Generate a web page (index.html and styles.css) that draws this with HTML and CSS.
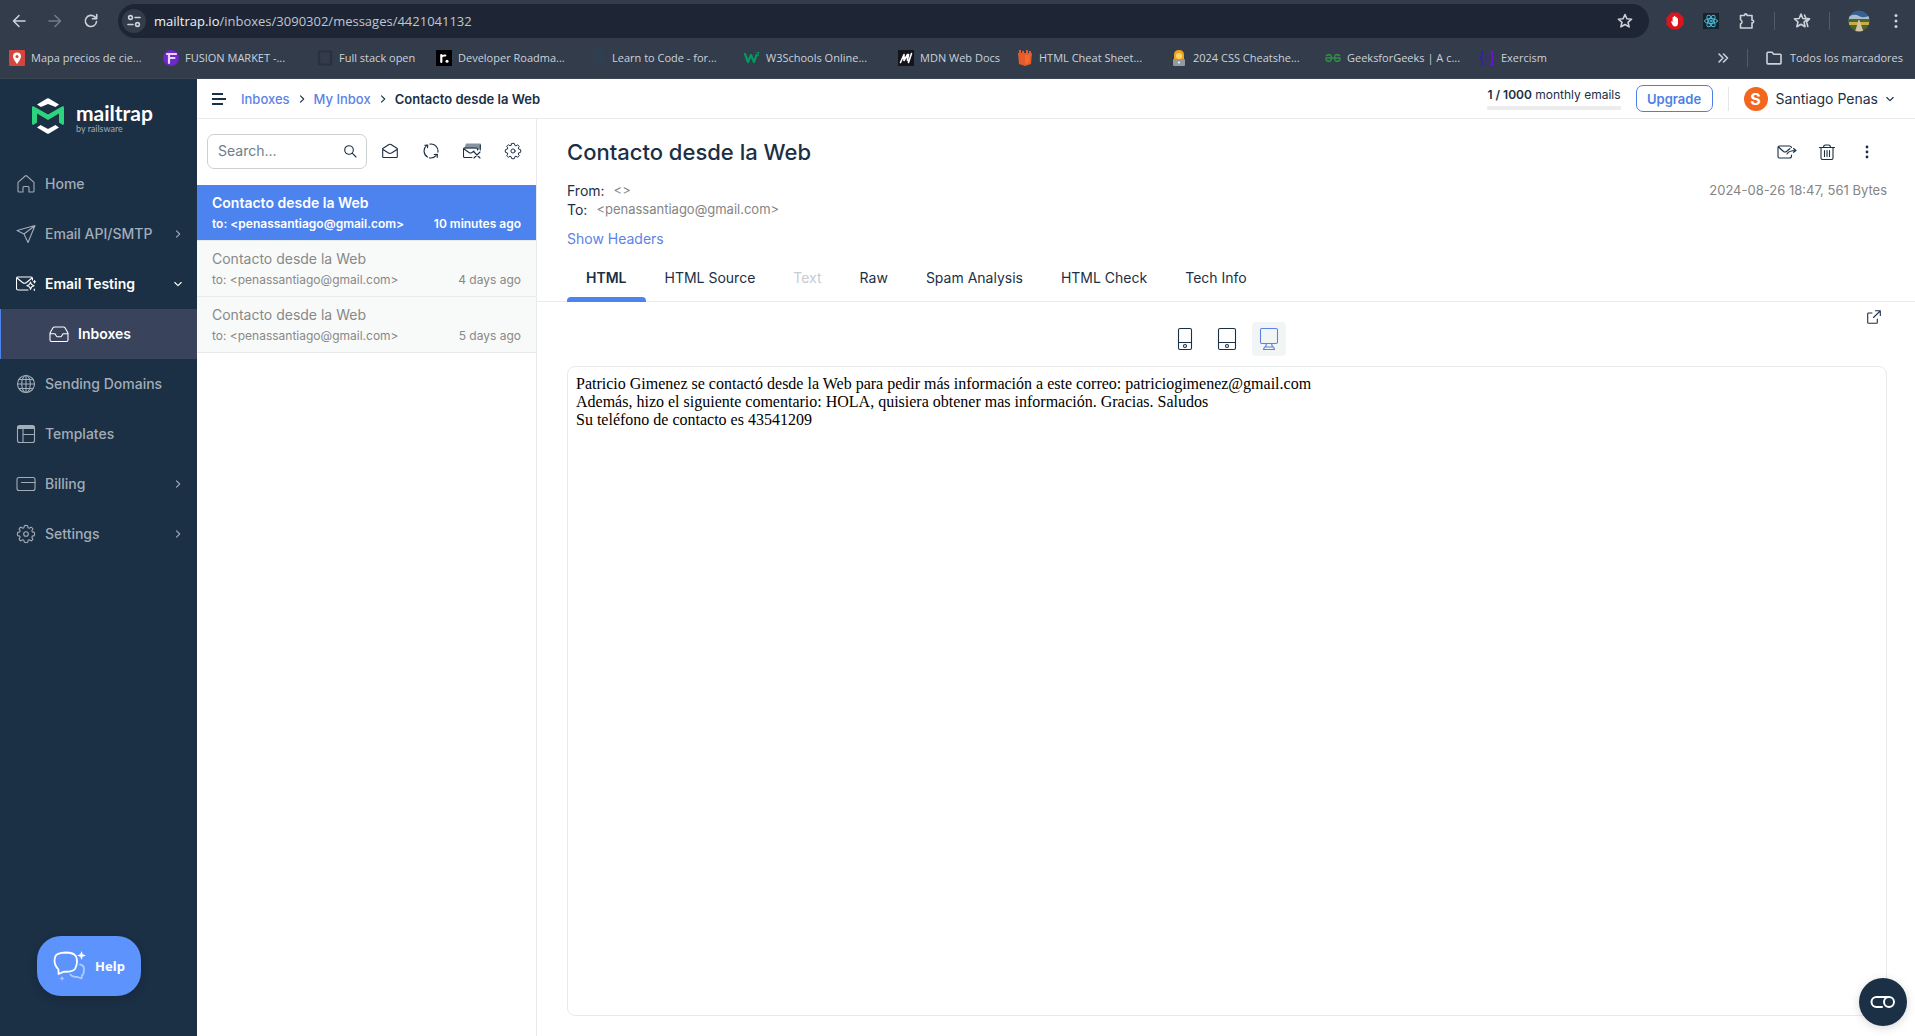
FILE: index.html
```html
<!DOCTYPE html>
<html lang="en">
<head>
<meta charset="utf-8">
<title>Contacto desde la Web - Mailtrap</title>
<link rel="stylesheet" href="styles.css">
</head>
<body>
<svg class="defs" aria-hidden="true">
  <symbol id="gear" viewBox="0 0 20 20"><path d="M8.400 1.800 Q10 1 11.600 1.800 L12.100 3.800 L13.300 4.300 L15.100 3.200 Q16.600 3.800 16.900 5 L15.800 6.700 L16.300 7.900 L18.300 8.400 Q19.100 10 18.300 11.600 L16.300 12.100 L15.800 13.300 L16.900 15.100 Q16.200 16.600 15 16.900 L13.300 15.800 L12.100 16.300 L11.600 18.300 Q10 19.100 8.400 18.300 L7.900 16.300 L6.700 15.800 L4.900 16.900 Q3.400 16.200 3.100 15 L4.200 13.300 L3.700 12.100 L1.700 11.600 Q.9 10 1.700 8.400 L3.700 7.900 L4.200 6.700 L3.100 4.900 Q3.800 3.400 5 3.100 L6.700 4.200 L7.900 3.700Z"/><circle cx="10" cy="10" r="2.300"/></symbol>
  <symbol id="right" viewBox="0 0 8 8"><path d="M2.500 .8 L5.700 4 L2.500 7.200"/></symbol>
  <symbol id="down" viewBox="0 0 8 8"><path d="M.8 2.500 L4 5.700 L7.200 2.500"/></symbol>
</svg>

<div class="browser">
  <div class="toolbar">
    <button class="nav-btn" aria-label="Back"><svg class="ic16" viewBox="0 0 16 16"><path d="M14 8H2.500M8 2.500 2.500 8 8 13.500"/></svg></button>
    <button class="nav-btn faded" aria-label="Forward"><svg class="ic16" viewBox="0 0 16 16"><path d="M2 8h11.500M8 2.500 13.500 8 8 13.500"/></svg></button>
    <button class="nav-btn" aria-label="Reload"><svg class="ic16" viewBox="0 0 16 16"><path d="M13.500 8.500a5.600 5.600 0 1 1-1.700-4.600L13.500 5.500M13.700 1.500v4.300H9.400"/></svg></button>
    <div class="omnibox">
      <span class="site-info"><svg class="ic14" viewBox="0 0 14 14"><circle cx="3.500" cy="3.500" r="1.900"/><path d="M8 3.500h5M1 10.500h5"/><circle cx="10.500" cy="10.500" r="1.900"/></svg></span>
      <span class="url"><b>mailtrap.io</b>/inboxes/3090302/messages/4421041132</span>
      <svg class="ic16" viewBox="0 0 16 16"><path d="m8 1.500 1.900 4.300 4.700.4-3.600 3.100 1.100 4.600L8 11.500l-4.100 2.400L5 9.300 1.400 6.200l4.700-.4z"/></svg>
    </div>
    <div class="extensions">
      <svg class="ic18" viewBox="0 0 18 18"><path class="fill-red" d="M5.500.5h7l5 5v7l-5 5h-7l-5-5v-7z"/><path class="fill-white" d="M5 9.500q1-.6 1.600.5V5.300q.7-.9 1.300 0V4.200q.7-.9 1.400 0v1q.7-.9 1.400 0v1.300q.7-.8 1.300 0V11c0 2-1 3.500-2.800 3.500-2 0-3.200-2-4.200-5z"/></svg>
      <svg class="ic18" viewBox="0 0 18 18"><path class="fill-dark" d="M1 1h16v16H1z"/><g class="react"><ellipse cx="9" cy="9" rx="6.500" ry="2.500"/><ellipse cx="9" cy="9" rx="6.500" ry="2.500" transform="rotate(60 9 9)"/><ellipse cx="9" cy="9" rx="6.500" ry="2.500" transform="rotate(120 9 9)"/><circle cx="9" cy="9" r="1"/></g></svg>
      <svg class="ic18" viewBox="0 0 18 18"><path d="M2.500 3.500h4V2.800q1-1.800 2.500 0v.7h5v4.700h.8q1.800 1.200 0 2.600H14v5.200H2.500v-4q3-2 0-4.300z"/></svg>
      <i class="bar"></i>
      <svg class="ic18" viewBox="0 0 18 18"><path d="m8 2 1.800 4.500 4.700.4L11 10l1 4.700-4-2.500-4.200 2.500L5 10 1.500 6.900l4.700-.4zM11.500 3l1.300 3.300 3.700.6-3 3 1.300 4.600"/></svg>
      <i class="bar"></i>
      <svg class="ic22" viewBox="0 0 22 22"><clipPath id="round"><circle cx="11" cy="11" r="10.500"/></clipPath><g clip-path="url(#round)"><path fill="#35608f" d="M0 0h22v12H0z"/><path fill="#a9bccb" d="M0 7q6-4 11-1t11-1v5H0z"/><path fill="#4c6529" d="M0 9h22v13H0z"/><path fill="#c9ac45" d="M0 12h22v3H0z"/><path fill="#d0c3a6" d="M10.500 10h1l4 12H7z"/></g></svg>
      <svg class="ic16 solid" viewBox="0 0 16 16"><circle cx="8" cy="2.500" r="1.500"/><circle cx="8" cy="8" r="1.500"/><circle cx="8" cy="13.500" r="1.500"/></svg>
    </div>
  </div>
  <nav class="bookmarks" aria-label="Bookmarks">
    <a href="#" class="mark wide"><svg class="ic16" viewBox="0 0 16 16"><rect fill="#d6453d" stroke="none" width="16" height="16" rx="1"/><path class="fill-white" d="M8 2.500a4 4 0 0 1 4 4c0 2.500-4 7.500-4 7.500S4 9 4 6.500a4 4 0 0 1 4-4z"/><circle cx="8" cy="6.500" r="1.500" fill="#d6453d" stroke="none"/></svg><span>Mapa precios de cie...</span></a>
    <a href="#" class="mark wide"><svg class="ic16" viewBox="0 0 16 16"><circle cx="8" cy="8" r="8" fill="#6d28c9" stroke="none"/><path class="line2" stroke="#e8d4ff" d="M4 4h9M6 13V8h5.500M6 8V4"/></svg><span>FUSION MARKET -...</span></a>
    <a href="#" class="mark"><svg class="ic16" viewBox="0 0 16 16"><rect class="line2" x="2" y="1.500" width="12" height="13" stroke="#2b313a"/></svg><span>Full stack open</span></a>
    <a href="#" class="mark wide"><svg class="ic16" viewBox="0 0 16 16"><path fill="#000" stroke="none" d="M0 0h16v16H0z"/><path class="line2" stroke="#fff" d="M5.300 12V5M5.300 7q1-1.700 4-1.500"/><circle cx="11" cy="11.300" r="1.500" class="fill-white"/></svg><span>Developer Roadma...</span></a>
    <a href="#" class="mark wide"><svg class="ic16" viewBox="0 0 16 16"><path fill="#2f3e50" stroke="none" d="M3 0h10v16H3z"/></svg><span>Learn to Code - for...</span></a>
    <a href="#" class="mark wide"><svg class="ic16" viewBox="0 0 16 16"><path class="line2" stroke="#059862" d="m1 4 3 8 3-7 3 7 2.500-7"/><path class="line1" stroke="#059862" d="M13 2.500h2L14 4q2 1.500-1 2"/></svg><span>W3Schools Online...</span></a>
    <a href="#" class="mark"><svg class="ic16" viewBox="0 0 16 16"><path fill="#15141a" stroke="none" d="M0 0h16v16H0z"/><path stroke="#fff" d="m2.500 12.500 3.500-8v6l3.500-6v6l1-6M13.500 3.500 10.500 12.500"/></svg><span>MDN Web Docs</span></a>
    <a href="#" class="mark wide"><svg class="ic16" viewBox="0 0 16 16"><path fill="#e55b2b" stroke="none" d="M1 3h14l-1 11-6 2-6-2zM2 0h2v4H2zM5 1h2v3H5zM9 0h2v4H9zM12 1h2v3h-2z"/><path fill="#f4692e" stroke="none" d="M8 5h5l-1 8-4 1.500z"/></svg><span>HTML Cheat Sheet...</span></a>
    <a href="#" class="mark wide"><svg class="ic16" viewBox="0 0 16 16"><path fill="#f0a31d" stroke="none" d="M3 9V5q0-5 5-5t5 5v4z"/><circle cx="8" cy="6" r="3" fill="#fcd56a" stroke="none"/><rect x="2" y="9" width="12" height="7" rx="1" fill="#94999d" stroke="none"/><circle cx="8" cy="12.500" r="1" class="fill-white"/></svg><span>2024 CSS Cheatshe...</span></a>
    <a href="#" class="mark wide"><svg class="ic16" viewBox="0 0 16 16"><path stroke="#2f8d46" d="M1 8h14M1.500 5.500q5-2.500 5 2.500t-5 2.500Q1 9.500 1 8M14.500 5.500q-5-2.500-5 2.500t5 2.500Q15 9.500 15 8"/></svg><span>GeeksforGeeks | A c...</span></a>
    <a href="#" class="mark"><svg class="ic16" viewBox="0 0 16 16"><path stroke="#3d16c4" d="M4.500 1.500H2.800v5L1.500 8l1.300 1.500v5h1.700"/><path stroke="#6a14d8" d="M11.500 1.500h1.700v5L14.500 8l-1.300 1.500v5h-1.700"/><path class="line1" stroke="#4a16c4" d="M6 7h1M9 7h1M6.500 10q1.500 1 3 0"/></svg><span>Exercism</span></a>
    <span class="mark-end">
      <svg class="ic12" viewBox="0 0 12 12"><path d="m2 2 4 4-4 4M6.500 2l4 4-4 4"/></svg>
      <i class="bar"></i>
      <a href="#" class="mark"><svg class="ic16" viewBox="0 0 16 16"><path d="M1 13V3.200q0-.9.900-.9h4.200l1.600 1.900h6.400q.9 0 .9.900V13q0 .9-.9.900H1.900Q1 13.900 1 13z"/></svg><span>Todos los marcadores</span></a>
    </span>
  </nav>
</div>

<div class="app">
  <aside class="sidebar">
    <a href="#" class="logo" aria-label="Mailtrap by Railsware">
      <svg class="logo-mark" viewBox="0 0 32 36"><path class="fill-white" d="M5 6.500 15 .6q1-.6 2 0L27 6.500 23.500 9 16 6 9 9zM5 29.500l10 5.900q1 .6 2 0l10-5.900-3.500-2.500-7.500 4-7.500-4z"/><path fill="#2bd47d" d="M0 9.500q0-2 2-1l14 8 14-8q2-1 2 1v16q0 2-2 1l-3-2V15.500L16 22 5 15.500v9l-3 2q-2 1-2-1z"/></svg>
      <span class="logo-text"><strong>mailtrap</strong><small>by railsware</small></span>
    </a>
    <nav class="menu">
      <a href="#"><svg class="ic20" viewBox="0 0 20 20"><path d="M2 8.300 9.200 2q.8-.7 1.600 0L18 8.300V17q0 1-1 1h-4v-4.500q0-1-1-1H8q-1 0-1 1V18H3q-1 0-1-1z"/></svg><span>Home</span></a>
      <a href="#"><svg class="ic20" viewBox="0 0 20 20"><path d="M1 6.500 19 1.500 12 18.500 8 10zM8 10 19 1.500"/></svg><span>Email API/SMTP</span><svg class="ic8"><use href="#right"/></svg></a>
      <a href="#" class="open"><svg class="ic20" viewBox="0 0 20 20"><path d="M12 16H2q-1.500 0-1.500-1.500v-10Q.5 3 2 3h13q1.500 0 1.500 1.500V6M1 4l5.500 4.500q2 1.500 4 0L16 4M14.500 8q.4 3.200 3.600 3.700-3.200.5-3.600 3.800-.4-3.300-3.700-3.800 3.300-.5 3.700-3.700zM18.500 6.500v2.400M17.300 7.700h2.400M18.300 15v1.500"/></svg><span>Email Testing</span><svg class="ic8"><use href="#down"/></svg></a>
      <a href="#" class="sub"><svg class="ic20" viewBox="0 0 20 20"><path d="M1 9 4 3.700Q4.500 3 5.500 3h9q1 0 1.500.7L19 9v7q0 1.500-1.500 1.500h-15Q1 17.500 1 16zM1 9.800h5l1.500 2.400q.3.500 1 .5h3q.7 0 1-.5L14 9.800h5"/></svg><span>Inboxes</span></a>
      <a href="#"><svg class="ic20" viewBox="0 0 20 20"><circle cx="10" cy="10" r="8.500"/><ellipse cx="10" cy="10" rx="4.300" ry="8.500"/><path d="M10 1.500v17M1.500 10h17M3 5.500h14M3 14.500h14"/></svg><span>Sending Domains</span></a>
      <a href="#"><svg class="ic20" viewBox="0 0 20 20"><rect x="1.500" y="1.500" width="17" height="17" rx="2"/><path d="M2 2.500h16M2 3.500h16M1.500 4.500h17M7 4.500v14M7 10.500h11.500"/></svg><span>Templates</span></a>
      <a href="#"><svg class="ic20" viewBox="0 0 20 20"><rect x="1" y="3.500" width="18" height="13" rx="2"/><path d="M5.500 8.500H19"/></svg><span>Billing</span><svg class="ic8"><use href="#right"/></svg></a>
      <a href="#"><svg class="ic20"><use href="#gear"/></svg><span>Settings</span><svg class="ic8"><use href="#right"/></svg></a>
    </nav>
    <button class="help"><svg viewBox="0 0 34 32"><path d="M5.500 19.500Q-.5 13 2.500 6 4 3 12.500 2.500q8.500 0 10.500 4 2.500 6-1 12.500-2 3-11 2.700L5.500 24z"/><path class="thin" d="M27 14.500q4.500 1 4 5.500 0 4-2 5.500l-.5 3-4-1.500Q19 27 17.500 24.500"/><path class="fill-white" d="m28.500 1 1.200 3.300L33 5.500l-3.300 1.200L28.500 10l-1.200-3.300L24 5.500l3.300-1.200z"/><path class="pale" d="m9 26 .8 1.700 1.700.8-1.700.8L9 31l-.8-1.700-1.700-.8 1.700-.8z"/></svg>Help</button>
  </aside>

  <div class="page">
    <header class="header">
      <button class="burger" aria-label="Toggle menu"><svg class="ic16" viewBox="0 0 16 14"><path d="M1 2h11M1 7h14M1 12h11"/></svg></button>
      <nav class="crumbs" aria-label="Breadcrumb"><a href="#">Inboxes</a><svg class="ic8"><use href="#right"/></svg><a href="#">My Inbox</a><svg class="ic8"><use href="#right"/></svg><span>Contacto desde la Web</span></nav>
      <div class="usage"><span><b>1 / 1000</b> monthly emails</span><i></i></div>
      <button class="upgrade">Upgrade</button>
      <button class="account"><span class="avatar">S</span>Santiago Penas<svg class="ic8"><use href="#down"/></svg></button>
    </header>

    <div class="content">
      <section class="inbox">
        <div class="inbox-tools">
          <label class="search"><input type="text" placeholder="Search..." aria-label="Search"><svg class="ic14" viewBox="0 0 14 14"><circle cx="6" cy="6" r="4.300"/><path d="m9.200 9.200 3.800 3.800"/></svg></label>
          <button aria-label="Mark all as read"><svg class="ic16" viewBox="0 0 16 16"><path d="M.7 5.500 7 1.500q1-.6 2 0l6.300 4v8.300q0 .7-.7.7H1.400q-.7 0-.7-.7zM1 6.500 6.500 10q1.500.8 3 0L15 6.500"/></svg></button>
          <button aria-label="Refresh"><svg class="ic16" viewBox="0 0 16 16"><path d="M3.500 2.700A7 7 0 0 0 4.500 14M6.500 14.900a7 7 0 0 0 6.500-2.200M7 1.100a7 7 0 0 1 7.900 8M11.500 2l.5.400M1.800 2.200l3-.2-.3 2.800M14.200 14.500l.2-3.200-3.200.2"/></svg></button>
          <button aria-label="Clear inbox"><svg class="ic18" viewBox="0 0 18 18"><path fill="#8793a0" stroke="#8793a0" d="M2.500 4.500 3.500 2h13.800v3.500l-2 2V6H1.800z"/><path d="M9 15.500H1.500q-1 0-1-1V7q0-1 1-1h12q1 0 1 1v1M1 7l5 3.500q1.500 1 3 0L11 9M11 10l6 6M17 10l-6 6M17.300 3v5"/></svg></button>
          <button aria-label="Inbox settings"><svg class="ic18"><use href="#gear"/></svg></button>
        </div>
        <a href="#" class="message selected"><strong>Contacto desde la Web</strong><span class="meta"><span>to: &lt;penassantiago@gmail.com&gt;</span><time>10 minutes ago</time></span></a>
        <a href="#" class="message"><strong>Contacto desde la Web</strong><span class="meta"><span>to: &lt;penassantiago@gmail.com&gt;</span><time>4 days ago</time></span></a>
        <a href="#" class="message"><strong>Contacto desde la Web</strong><span class="meta"><span>to: &lt;penassantiago@gmail.com&gt;</span><time>5 days ago</time></span></a>
      </section>

      <main class="mail">
        <div class="mail-head">
          <div class="title-row">
            <h1>Contacto desde la Web</h1>
            <button aria-label="Forward"><svg class="ic20" viewBox="0 0 20 20"><path d="M14.500 13v1q0 2-2 2h-10Q1 16 1 14.500v-9Q1 4 2.500 4h10q1.500 0 2 1.500M1.500 5l5 4.500q1.500 1 3 0L13 6.500M10 12q2-3.500 8.500-3.500M16.500 6.500l2.500 2-2.500 1.800"/></svg></button>
            <button aria-label="Delete"><svg class="ic16" viewBox="0 0 16 16"><path d="M.5 3.500h15M2 3.500V14q0 1.500 1.500 1.500h9Q14 15.500 14 14V3.500M4.500 3.500q0-2.500 2-2.500h3q2 0 2 2.500M5.500 6.500v6M8 6.500v6M10.500 6.500v6"/></svg></button>
            <button aria-label="More"><svg class="ic16 solid" viewBox="0 0 16 16"><circle cx="8" cy="3" r="1.400"/><circle cx="8" cy="8" r="1.400"/><circle cx="8" cy="13" r="1.400"/></svg></button>
          </div>
          <div class="envelope">
            <dl><div><dt>From:</dt><dd>&lt;&gt;</dd></div><div><dt>To:</dt><dd>&lt;penassantiago@gmail.com&gt;</dd></div></dl>
            <span class="stamp">2024-08-26 18:47, 561 Bytes</span>
          </div>
          <a href="#" class="headers-link">Show Headers</a>
        </div>
        <div class="tabs" role="tablist">
          <button role="tab" aria-selected="true" class="active">HTML</button>
          <button role="tab">HTML Source</button>
          <button role="tab" disabled>Text</button>
          <button role="tab">Raw</button>
          <button role="tab">Spam Analysis</button>
          <button role="tab">HTML Check</button>
          <button role="tab">Tech Info</button>
        </div>
        <div class="preview">
          <div class="preview-tools">
            <div class="devices">
              <button aria-label="Phone"><svg class="ic24" viewBox="0 0 24 24"><rect x="5.500" y="1.500" width="13" height="21" rx="1.500"/><path d="M5.500 15.500h13"/><circle cx="12" cy="19" r="1.500"/></svg></button>
              <button aria-label="Tablet"><svg class="ic24" viewBox="0 0 24 24"><rect x="3.500" y="1.500" width="17" height="21" rx="1.500"/><path d="M3.500 15.500h17"/><circle cx="12" cy="19" r="1.500"/></svg></button>
              <button aria-label="Desktop" class="active"><svg class="ic24" viewBox="0 0 24 24"><rect x="3.500" y="1.500" width="17" height="15" rx="1.500"/><path d="M9.500 16.500 8.500 20M14.500 16.500l1 3.500M7.500 20h9l1 2.500h-11z"/></svg></button>
            </div>
            <button class="external" aria-label="Open in new tab"><svg class="ic14" viewBox="0 0 14 14"><path d="M5 3H1.500q-.8 0-.8.800v8.700q0 .8.800.8h8q.8 0 .8-.8V9M8.500.7h4.800v4.800M13.200.8 6.500 7.500"/></svg></button>
          </div>
          <article class="body">Patricio Gimenez se contactó desde la Web para pedir más información a este correo: patriciogimenez@gmail.com<br>Además, hizo el siguiente comentario: HOLA, quisiera obtener mas información. Gracias. Saludos<br>Su teléfono de contacto es 43541209</article>
        </div>
      </main>
    </div>
  </div>
</div>
<button class="consent" aria-label="Cookie settings"><svg viewBox="0 0 26 14"><path d="M12 12H6.500a5 5 0 0 1 0-10H19"/><circle cx="19" cy="7" r="5"/></svg></button>
</body>
</html>
```
FILE: styles.css
```css
* { box-sizing: border-box; }

body {
  margin: 0;
  min-height: 100vh;
  display: flex;
  flex-direction: column;
  background: #fff;
  color: #1b2f45;
  font: 14px/20px Inter, "Liberation Sans", sans-serif;
}

a { color: inherit; text-decoration: none; }

button {
  display: flex;
  align-items: center;
  justify-content: center;
  padding: 0;
  border: 0;
  background: none;
  color: inherit;
  font: inherit;
}

svg { flex: none; display: block; fill: none; stroke: currentColor; stroke-width: 1.1; stroke-linejoin: round; stroke-linecap: round; }
.defs { position: absolute; width: 0; height: 0; }
.ic8 { width: 8px; height: 8px; }
.ic12 { width: 12px; height: 12px; }
.ic14 { width: 14px; height: 14px; }
.ic16 { width: 16px; height: 16px; }
.ic18 { width: 18px; height: 18px; }
.ic20 { width: 20px; height: 20px; }
.ic22 { width: 22px; height: 22px; stroke: none; }
.ic24 { width: 24px; height: 24px; }
.solid { fill: currentColor; stroke: none; }
.line1 { stroke-width: 1; }
.line2 { stroke-width: 2.2; }
.fill-red { fill: #d9161e; stroke: none; }
.fill-white { fill: #fff; stroke: none; }
.fill-dark { fill: #15232c; stroke: none; }
.react { stroke: #4fb9d6; stroke-width: 1; }

/* Browser frame */
.browser {
  height: 79px;
  background: #323c4b;
  border-bottom: 1px solid #3c4552;
  color: #ccd2da;
  font: 12px/16px "Open Sans", "Noto Sans", sans-serif;
}
.browser svg { stroke-width: 1.6; }
.toolbar { display: flex; align-items: center; padding: 4px 11px 0 1px; }
.nav-btn { width: 36px; height: 34px; }
.faded { color: #717b89; }
.omnibox {
  flex: 1;
  display: flex;
  align-items: center;
  gap: 8px;
  height: 34px;
  margin: 0 17px 0 9px;
  padding: 0 16px 0 4px;
  border-radius: 17px;
  background: #1e2636;
}
.site-info { display: grid; place-items: center; width: 24px; height: 24px; border-radius: 50%; background: #323c4b; }
.url { flex: 1; font-size: 13px; line-height: 20px; color: #bfc6d0; }
.url b { font-weight: 400; color: #f0f3f7; }
.extensions { display: flex; align-items: center; gap: 18px; }
.bar { width: 1px; height: 18px; background: #515b69; }
.bookmarks { display: flex; align-items: center; gap: 16px; height: 40px; padding: 0 12px 0 9px; }
.mark { display: flex; align-items: center; gap: 6px; min-width: 103px; white-space: nowrap; font-size: 11px; }
.wide { width: 138px; }
.mark-end { display: flex; align-items: center; gap: 18px; margin-left: auto; }
.mark-end .mark { gap: 8px; }

/* Sidebar */
.app { flex: 1; display: flex; }
.sidebar {
  flex: none;
  display: flex;
  flex-direction: column;
  width: 197px;
  background: #1b2f45;
  color: #a2adb7;
}
.logo { display: flex; align-items: center; gap: 12px; padding: 19px 32px 25px; color: #fff; }
.logo-mark { width: 32px; height: 36px; stroke: none; }
.logo-text { display: flex; flex-direction: column; padding-top: 3px; font-family: Lato, sans-serif; }
.logo-text strong { font-size: 21px; line-height: 22px; }
.logo-text small { font-size: 9px; line-height: 10px; color: #a2adb7; }
.menu a { display: flex; align-items: center; gap: 9px; height: 50px; padding: 0 15px 0 16px; font-weight: 500; }
.menu span { flex: 1; }
.menu .open { color: #fff; font-weight: 600; }
.menu .sub { padding-left: 48px; border-left: 1px solid #4c83ee; background: #39435c; color: #fff; font-weight: 600; }
.help {
  gap: 8px;
  width: 104px;
  height: 60px;
  margin: auto 0 40px 37px;
  border-radius: 24px;
  background: #5c93fd;
  box-shadow: 0 3px 10px rgba(0, 0, 0, .15);
  color: #fff;
  font: 700 13px/20px "Noto Sans", sans-serif;
}
.help svg { width: 34px; height: 32px; stroke-width: 1.8; }
.help .thin { opacity: .5; }
.help .pale { fill: #fff; stroke: none; opacity: .5; }

/* Header */
.page { flex: 1; display: flex; flex-direction: column; min-width: 0; }
.header { display: flex; align-items: center; height: 40px; padding: 0 21px 0 14px; border-bottom: 1px solid #e8eaec; }
.burger .ic16 { stroke-width: 2; stroke-linecap: butt; }
.crumbs { display: flex; align-items: center; gap: 8px; margin: 0 auto 0 14px; font-size: 13px; font-weight: 500; }
.crumbs a, .headers-link { color: #5d82e6; }
.crumbs span { font-weight: 600; }
.usage { display: flex; flex-direction: column; gap: 3px; font-size: 12px; line-height: 16px; }
.usage b { font-weight: 600; }
.usage i { height: 4px; border-radius: 1px; background: #ececec; }
.upgrade { width: 77px; height: 27px; margin: 0 15px; border: 1px solid #4c7fe6; border-radius: 7px; color: #4c7fe6; font-size: 13px; font-weight: 600; }
.account { gap: 8px; height: 24px; padding-left: 15px; border-left: 1px solid #e4e7ea; }
.avatar { width: 24px; height: 24px; border-radius: 50%; background: #f2661d; color: #fff; font-weight: 700; line-height: 24px; font-size: 16px; }

/* Message list */
.content { flex: 1; display: flex; }
.inbox { flex: none; width: 340px; border-right: 1px solid #e8eaec; }
.inbox-tools { display: flex; align-items: center; height: 66px; padding: 0 2px 2px 10px; }
.inbox-tools button { flex: 1; height: 34px; }
.search { display: flex; align-items: center; width: 160px; height: 35px; margin-right: 2px; padding: 0 9px 0 10px; border: 1px solid #ccd0d3; border-radius: 7px; }
.search input { flex: 1; min-width: 0; padding: 0; border: 0; outline: 0; background: none; font: inherit; color: inherit; }
.search input::placeholder { color: #6c7d8c; }
.message {
  display: flex;
  flex-direction: column;
  gap: 1px;
  height: 56px;
  padding: 8px 15px;
  border-bottom: 1px solid #e6eae9;
  background: #f8faf9;
  color: #888;
}
.message strong { font-weight: 400; }
.meta { display: flex; justify-content: space-between; font-size: 12px; }
.selected { background: #4d83ee; color: #fff; }
.selected strong, .selected .meta { font-weight: 600; }

/* Message */
.mail { flex: 1; display: flex; flex-direction: column; min-width: 0; }
.mail-head { padding: 19px 28px 5px 30px; }
.title-row { display: flex; height: 28px; }
.title-row button { width: 40px; }
h1 { flex: 1; margin: 0; font-size: 22px; line-height: 28px; font-weight: 500; }
.envelope { display: flex; justify-content: space-between; margin: 15px 0 10px; line-height: 19px; }
dl, dd { margin: 0; }
dl > div { display: flex; gap: 9px; }
dd, .stamp { font-size: 13px; color: #858585; }
.tabs { display: flex; height: 48px; padding-left: 30px; border-bottom: 1px solid #e8eaec; }
.tabs button { position: relative; padding: 0 19px; }
.tabs button:disabled { color: #c8ccd0; }
.tabs .active { font-weight: 600; }
.tabs .active::after { content: ""; position: absolute; inset: auto 0 -1px; height: 5px; border-radius: 4px 4px 0 0; background: #4d83ee; }
.preview { flex: 1; display: flex; flex-direction: column; padding: 0 28px 20px 30px; }
.preview-tools { display: grid; grid-template-columns: 1fr auto 1fr; height: 64px; padding-top: 6px; }
.devices { grid-column: 2; display: flex; gap: 8px; padding-top: 14px; }
.devices button { width: 34px; height: 34px; border-radius: 4px; }
.devices .active { background: #f2f5f6; color: #5d82e6; }
.external { justify-self: end; width: 26px; height: 18px; }
.body { flex: 1; padding: 8px; border: 1px solid #e8eaec; border-radius: 8px; color: #000; font: 16px/18px "Liberation Serif", serif; }

.consent {
  position: fixed;
  right: 8px;
  bottom: 10px;
  width: 48px;
  height: 48px;
  border-radius: 50%;
  background: #1b2f45;
  box-shadow: 0 2px 10px rgba(0, 0, 0, .15);
  color: #fff;
}
.consent svg { width: 26px; height: 14px; stroke-width: 2; }
```
